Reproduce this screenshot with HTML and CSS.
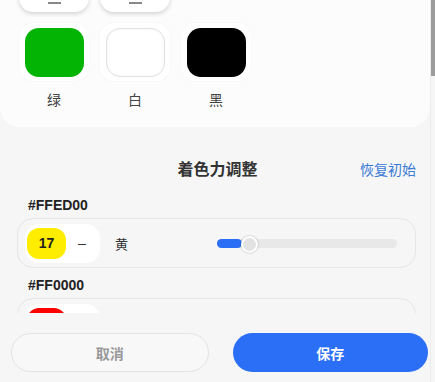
FILE: index.html
```html
<!DOCTYPE html>
<html lang="zh-CN">
<head>
    <meta charset="UTF-8">
    <meta name="viewport" content="width=device-width, initial-scale=1.0">
    <title>着色力调整</title>
    <link rel="stylesheet" href="styles.css">
</head>
<body>
    <div class="page">
        <div class="scroll-area">
            <!-- Palette -->
            <div class="palette-card">
                <div class="tile-row">
                    <div class="tool-tile"><span class="tool-dash"></span></div>
                    <div class="tool-tile"><span class="tool-dash"></span></div>
                </div>
                <div class="tile-row swatch-row">
                    <div class="swatch">
                        <div class="swatch-box"><div class="swatch-color green"></div></div>
                        <div class="swatch-name">绿</div>
                    </div>
                    <div class="swatch">
                        <div class="swatch-box"><div class="swatch-color white"></div></div>
                        <div class="swatch-name">白</div>
                    </div>
                    <div class="swatch">
                        <div class="swatch-box"><div class="swatch-color black"></div></div>
                        <div class="swatch-name">黑</div>
                    </div>
                </div>
            </div>

            <!-- Tint strength -->
            <div class="tint-section">
                <div class="section-header">
                    <h2>着色力调整</h2>
                    <a class="reset-link">恢复初始</a>
                </div>

                <div class="tint-group">
                    <div class="tint-code">#FFED00</div>
                    <div class="tint-row">
                        <div class="value-pill">
                            <span class="value-chip yellow">17</span>
                            <span class="value-dash">–</span>
                        </div>
                        <span class="tint-name">黄</span>
                        <div class="slider">
                            <div class="slider-fill" style="width: 25px;"></div>
                            <div class="slider-thumb" style="left: 24px;"></div>
                        </div>
                    </div>
                </div>

                <!-- second row is scrolled under the footer, only its top shows -->
                <div class="tint-group">
                    <div class="tint-code">#FF0000</div>
                    <div class="tint-row">
                        <div class="value-pill">
                            <span class="value-chip red"></span>
                        </div>
                    </div>
                </div>
            </div>
        </div>

        <div class="footer">
            <button class="btn btn-cancel">取消</button>
            <button class="btn btn-save">保存</button>
        </div>

        <div class="scrollbar"><div class="scrollbar-thumb"></div></div>
    </div>
</body>
</html>
```

FILE: styles.css
```css
body {
    margin: 0;
    font-family: "Liberation Sans", "Noto Sans CJK SC", sans-serif;
    background-color: #f6f6f6;
    color: #333;
}
.page {
    position: relative;
    width: 435px;
    height: 382px;
    display: flex;
    flex-direction: column;
    overflow: hidden;
}
.scroll-area {
    flex: 1;
    overflow: hidden;
    width: 430px;
}

/* Palette card */
.palette-card {
    margin-top: -58px;
    padding: 12px 19px 17px;
    background-color: #fcfcfc;
    border-radius: 0 0 20px 20px;
}
.tile-row {
    display: flex;
    gap: 11px;
}
.swatch-row {
    margin-top: 11px;
}
.tool-tile {
    width: 70px;
    height: 58px;
    background-color: #fff;
    border-radius: 14px;
    box-shadow: 0 2px 4px rgba(0, 0, 0, 0.16);
    display: flex;
    justify-content: center;
    align-items: flex-end;
}
.tool-dash {
    width: 13px;
    height: 2px;
    background-color: #888;
    margin-bottom: 8px;
}
.swatch {
    width: 70px;
}
.swatch-box {
    height: 58px;
    background-color: #fff;
    border-radius: 14px;
    box-shadow: 0 0 2px rgba(0, 0, 0, 0.06);
    display: flex;
    justify-content: center;
    align-items: center;
}
.swatch-color {
    width: 59px;
    height: 49px;
    border-radius: 14px;
    box-sizing: border-box;
}
.swatch-color.green {
    background-color: #04b404;
}
.swatch-color.white {
    background-color: #fff;
    border: 1px solid #e0e0e0;
    box-shadow: inset 0 0 3px rgba(0, 0, 0, 0.06);
}
.swatch-color.black {
    background-color: #000;
}
.swatch-name {
    margin-top: 9px;
    text-align: center;
    font-size: 14px;
    line-height: 20px;
    color: #444;
}

/* Tint section */
.tint-section {
    padding: 31px 14px 0 17px;
}
.section-header {
    position: relative;
    text-align: center;
    margin-bottom: 14px;
}
.section-header h2 {
    margin: 0;
    font-size: 16px;
    line-height: 24px;
    font-weight: bold;
    color: #333;
    padding-left: 2px;
}
.reset-link {
    position: absolute;
    right: 0;
    top: 0;
    font-size: 14px;
    line-height: 24px;
    color: #3a7bd5;
    cursor: pointer;
}
.tint-group {
    margin-bottom: 8px;
}
.tint-code {
    padding-left: 11px;
    font-size: 14px;
    line-height: 18px;
    font-weight: bold;
    color: #222;
    margin-bottom: 4px;
}
.tint-row {
    height: 50px;
    box-sizing: border-box;
    border: 1px solid #e6e6e6;
    border-radius: 16px;
    padding: 0 18px 0 7px;
    display: flex;
    align-items: center;
}
.value-pill {
    width: 75px;
    height: 39px;
    box-sizing: border-box;
    padding: 0 2px;
    background-color: #fff;
    border-radius: 14px;
    display: flex;
    align-items: center;
}
.value-chip {
    width: 39px;
    height: 31px;
    border-radius: 12px;
    display: flex;
    justify-content: center;
    align-items: center;
    font-size: 14px;
    font-weight: bold;
    color: #222;
}
.value-chip.yellow {
    background-color: #ffed00;
}
.value-chip.red {
    background-color: #ff0000;
}
.value-dash {
    flex: 1;
    text-align: center;
    font-size: 14px;
    color: #333;
}
.tint-name {
    margin-left: 15px;
    font-size: 13px;
    color: #333;
}
.slider {
    position: relative;
    margin-left: auto;
    width: 180px;
    height: 9px;
    border-radius: 5px;
    background-color: #e8e8e8;
}
.slider-fill {
    height: 100%;
    border-radius: 5px;
    background-color: #2a6ef5;
}
.slider-thumb {
    position: absolute;
    top: 50%;
    width: 13px;
    height: 13px;
    margin-top: -7.5px;
    border-radius: 50%;
    background-color: #e2e2e2;
    border: 2px solid #fff;
    box-shadow: 0 0 2px rgba(0, 0, 0, 0.3);
}

/* Footer */
.footer {
    height: 69px;
    box-sizing: border-box;
    padding: 20px 7px 0 11px;
    display: flex;
    gap: 24px;
    background-color: #f6f6f6;
}
.btn {
    flex: 1;
    height: 39px;
    border-radius: 20px;
    font-family: "Liberation Sans", "Noto Sans CJK SC", sans-serif;
    font-size: 14px;
    font-weight: bold;
    cursor: pointer;
}
.btn-cancel {
    background-color: #f8f8f8;
    border: 1px solid #e3e3e3;
    color: #999;
}
.btn-save {
    background-color: #2a6ff6;
    border: none;
    color: #fff;
}

/* Scrollbar overlay */
.scrollbar {
    position: absolute;
    top: 0;
    right: 0;
    width: 5px;
    height: 100%;
    border-left: 1px solid #ececec;
    box-sizing: border-box;
}
.scrollbar-thumb {
    width: 4px;
    height: 76px;
    background-color: #9c9c9c;
}
```
